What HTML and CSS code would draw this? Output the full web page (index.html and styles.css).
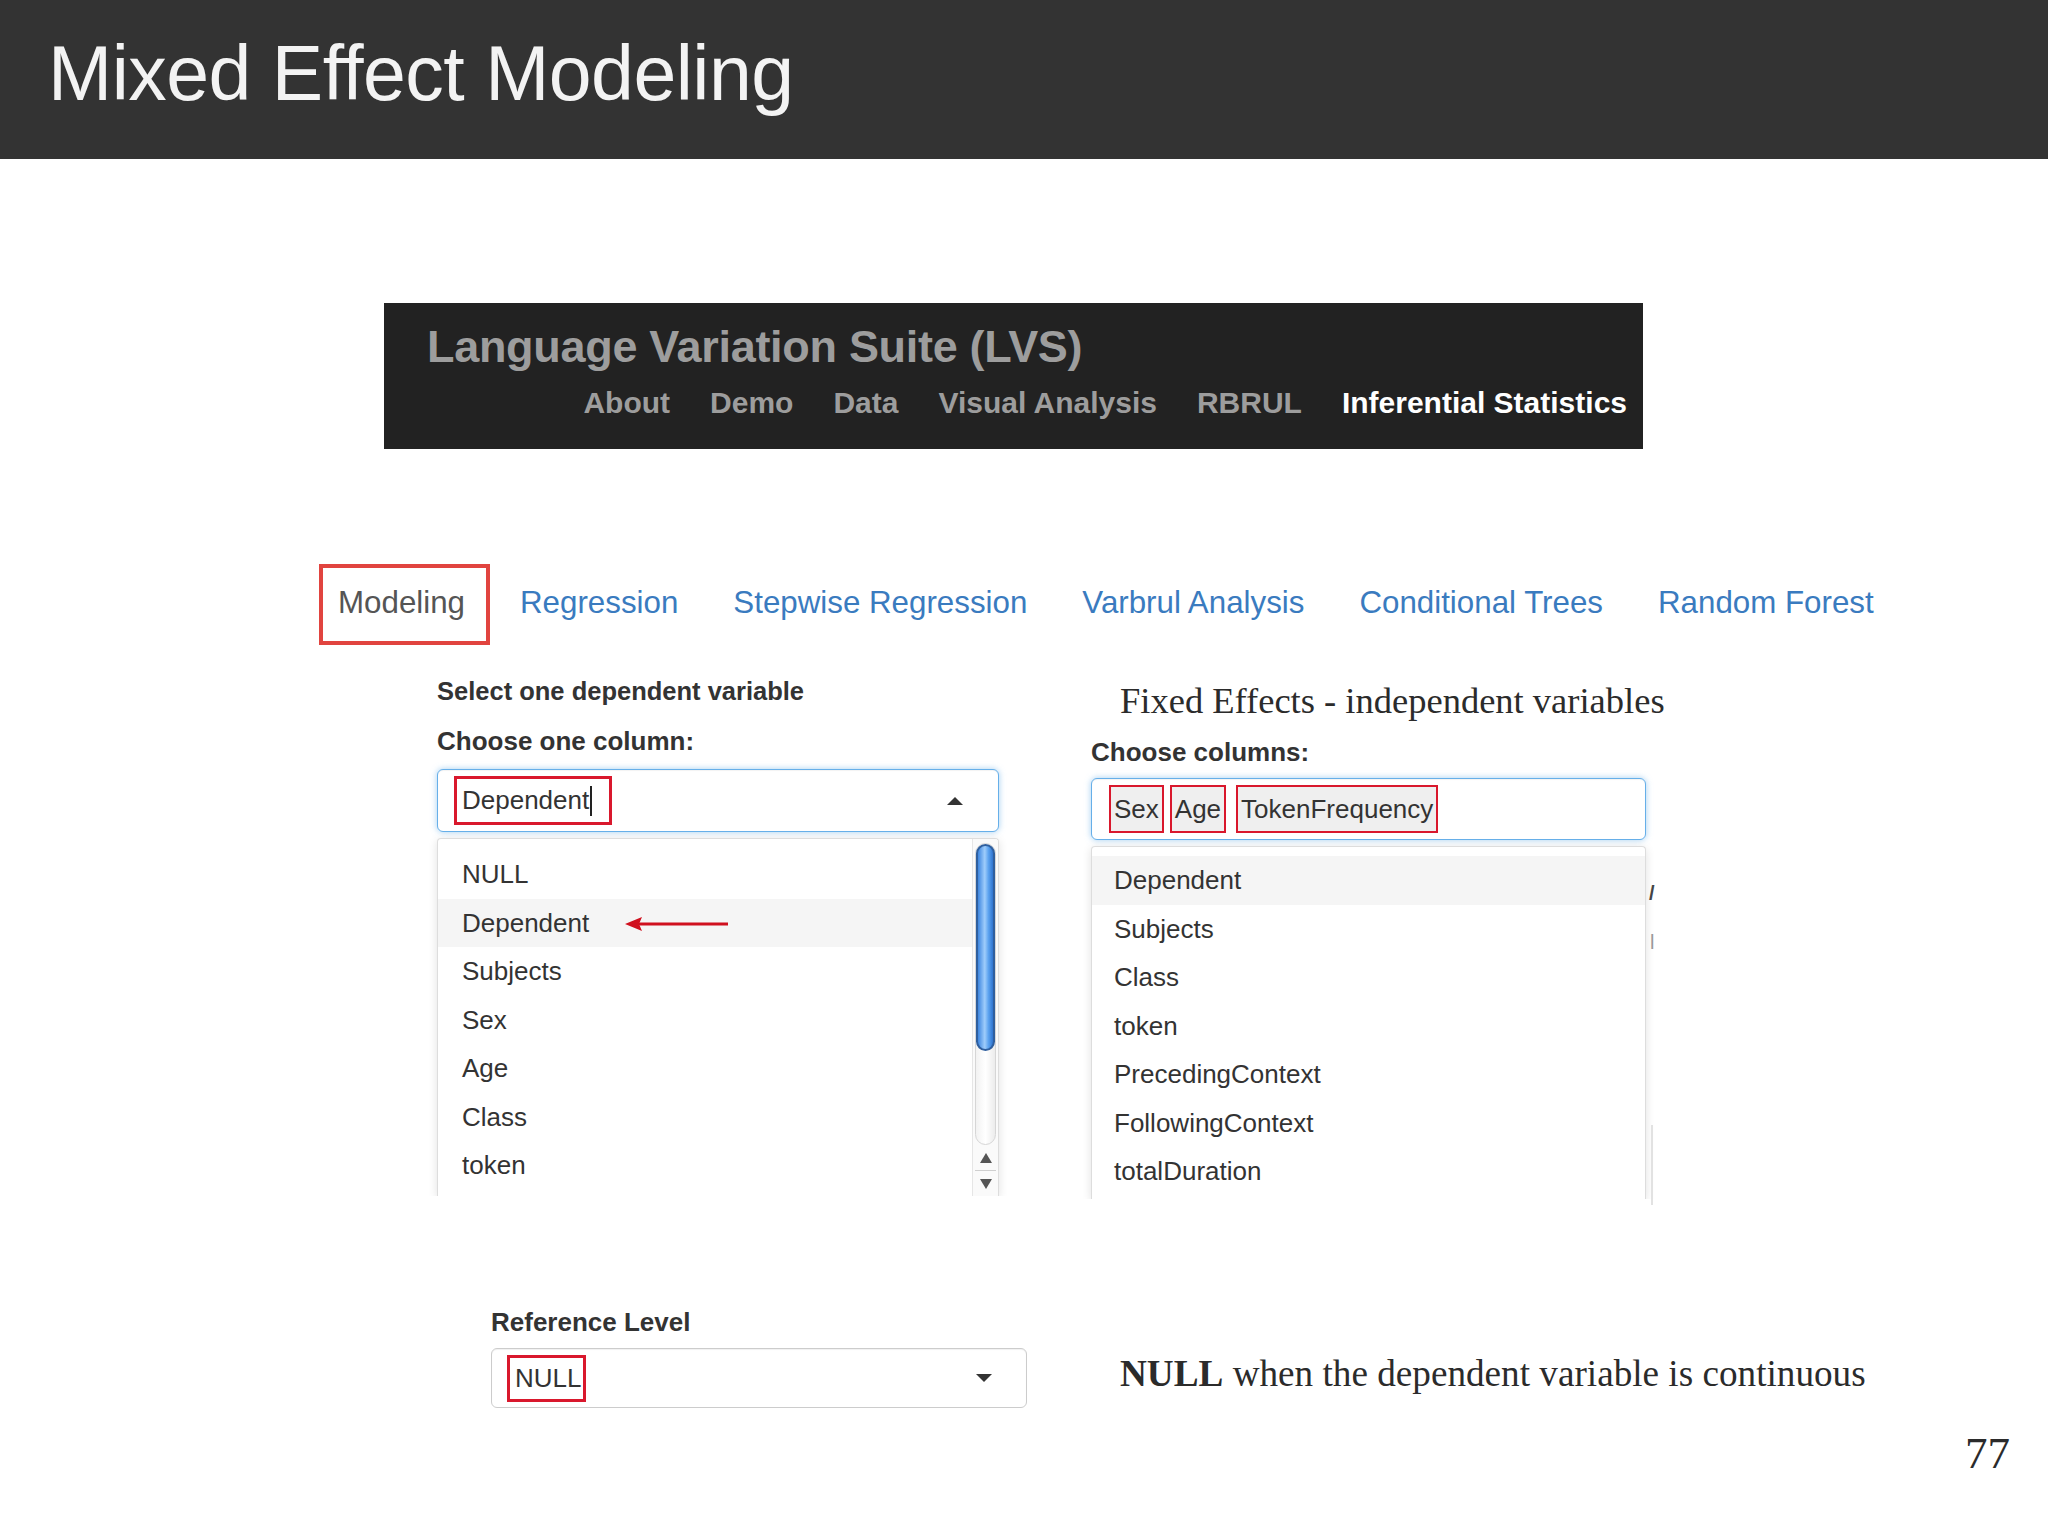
FILE: index.html
```html
<!DOCTYPE html>
<html lang="en">
<head>
<meta charset="utf-8">
<title>Mixed Effect Modeling</title>
<link rel="stylesheet" href="styles.css">
</head>
<body>
<div class="slide">
  <header class="hdr"><h1 class="hdr-title">Mixed Effect Modeling</h1></header>

  <section class="lvs">
    <div class="lvs-title">Language Variation Suite (LVS)</div>
    <nav class="lvs-nav">
      <span>About</span><span>Demo</span><span>Data</span><span>Visual Analysis</span><span>RBRUL</span><span class="on">Inferential Statistics</span>
    </nav>
  </section>

  <nav class="tabs">
    <span class="tab on">Modeling</span>
    <span class="tab">Regression</span>
    <span class="tab">Stepwise Regression</span>
    <span class="tab">Varbrul Analysis</span>
    <span class="tab">Conditional Trees</span>
    <span class="tab">Random Forest</span>
  </nav>

  <div class="cols">
    <div class="col col-left">
      <div class="lbl lbl-sub">Select one dependent variable</div>
      <div class="lbl lbl-gap">Choose one column:</div>
      <div class="select focus sel-left">
        <span class="mark mark-dep">Dependent<i class="cursor"></i></span>
        <span class="caret up"></span>
      </div>
      <div class="list list-left">
        <div class="items items-left">
          <div class="item">NULL</div>
          <div class="item hl">Dependent</div>
          <div class="item">Subjects</div>
          <div class="item">Sex</div>
          <div class="item">Age</div>
          <div class="item">Class</div>
          <div class="item">token</div>
        </div>
        <div class="scroll">
          <div class="track"><div class="thumb"></div></div>
          <div class="sbtn"><span class="tri-up"></span></div>
          <div class="sbtn sep"><span class="tri-down"></span></div>
        </div>
        <svg class="arrow" width="104" height="18" viewBox="0 0 104 18">
          <line x1="14" y1="9" x2="103" y2="9" stroke="#d0101e" stroke-width="3"/>
          <polygon points="0,9 17,2 14,9 17,16" fill="#d0101e"/>
        </svg>
      </div>
    </div>

    <div class="col col-right">
      <div class="serif-head">Fixed Effects - independent variables</div>
      <div class="lbl lbl-gap2">Choose columns:</div>
      <div class="select focus sel-right">
        <span class="tag">Sex</span>
        <span class="tag">Age</span>
        <span class="tag tag-wide">TokenFrequency</span>
      </div>
      <div class="list list-right">
        <div class="items items-right">
          <div class="item hl">Dependent</div>
          <div class="item">Subjects</div>
          <div class="item">Class</div>
          <div class="item">token</div>
          <div class="item">PrecedingContext</div>
          <div class="item">FollowingContext</div>
          <div class="item">totalDuration</div>
        </div>
      </div>
      <span class="peek peek1">/</span>
      <span class="peek peek2">l</span>
      <span class="peek-line"></span>
    </div>
  </div>

  <div class="bottom">
    <div class="ref">
      <div class="lbl">Reference Level</div>
      <div class="select plain sel-ref">
        <span class="mark mark-null">NULL</span>
        <span class="caret down"></span>
      </div>
    </div>
    <p class="note"><b>NULL</b> when the dependent variable is continuous</p>
  </div>

  <footer class="pnum">77</footer>
</div>
</body>
</html>
```

FILE: styles.css
```css
* { box-sizing: border-box; }
html, body { margin: 0; padding: 0; background: #ffffff; }
.slide {
  position: relative;
  width: 2048px;
  height: 1536px;
  overflow: hidden;
  background: #ffffff;
  font-family: "Liberation Sans", Arial, sans-serif;
  color: #333333;
}

/* Slide header */
.hdr {
  height: 159px;
  background: #333333;
  padding-left: 48px;
}
.hdr-title {
  margin: 0;
  font-weight: 400;
  font-size: 77px;
  line-height: 147px;
  color: #f3f3f3;
  letter-spacing: -0.5px;
  white-space: nowrap;
}

/* LVS navbar screenshot */
.lvs {
  margin: 144px 0 0 384px;
  width: 1259px;
  height: 146px;
  background: #222222;
  padding: 18px 16px 0 43px;
}
.lvs-title {
  font-weight: 700;
  font-size: 45px;
  line-height: 52px;
  color: #9d9d9d;
  letter-spacing: -0.3px;
  white-space: nowrap;
}
.lvs-nav {
  margin-top: 12px;
  display: flex;
  justify-content: flex-end;
  gap: 40px;
  font-weight: 700;
  font-size: 30px;
  line-height: 36px;
  color: #9d9d9d;
  white-space: nowrap;
}
.lvs-nav .on { color: #ffffff; }

/* Tabs */
.tabs {
  margin: 115px 0 0 319px;
  display: flex;
  gap: 11px;
  font-size: 31.3px;
}
.tab {
  border: 4px solid transparent;
  padding: 0 21px 3px 15px;
  line-height: 70px;
  color: #3a7bbf;
  white-space: nowrap;
}
.tab.on {
  border-color: #e1443f;
  color: #555555;
}

/* Two columns */
.cols {
  margin: 31px 0 0 437px;
  display: flex;
  gap: 92px;
}
.col { position: relative; }
.col-left { width: 562px; }
.col-right { width: 555px; padding-top: 5px; }

.lbl {
  font-weight: 700;
  font-size: 26px;
  line-height: 30px;
  color: #333333;
  white-space: nowrap;
}
.lbl-sub { font-size: 25.5px; }
.lbl-gap { margin-top: 20px; }
.lbl-gap2 { margin-top: 16px; }

.serif-head {
  font-family: "Liberation Serif", "Times New Roman", serif;
  font-size: 36.5px;
  line-height: 40px;
  color: #2b2b2b;
  padding-left: 29px;
  white-space: nowrap;
}

.select {
  display: flex;
  align-items: center;
  background: #ffffff;
  border-radius: 6px;
  font-size: 26px;
  color: #333333;
}
.select.focus {
  border: 1px solid #66afe9;
  box-shadow: 0 0 6px rgba(102, 175, 233, 0.6), inset 0 1px 1px rgba(0,0,0,0.05);
}
.select.plain {
  border: 1px solid #cccccc;
  box-shadow: inset 0 1px 1px rgba(0,0,0,0.06);
}
.sel-left { margin-top: 13px; height: 63px; padding: 0 35px 0 16px; }
.sel-right { margin-top: 11px; height: 62px; padding: 0 16px 0 17px; gap: 6px; }
.sel-ref { margin-top: 11px; height: 60px; padding: 0 34px 0 15px; }

.mark {
  display: inline-flex;
  align-items: center;
  border: 3px solid #d9182d;
  white-space: nowrap;
}
.mark-dep { height: 49px; width: 158px; padding-left: 5px; }
.mark-null { height: 47px; width: 79px; padding-left: 5px; }
.cursor {
  display: inline-block;
  width: 2px;
  height: 30px;
  background: #222222;
  margin-left: 1px;
}

.caret {
  margin-left: auto;
  width: 0;
  height: 0;
  border-left: 8px solid transparent;
  border-right: 8px solid transparent;
}
.caret.up { border-bottom: 8px solid #333333; }
.caret.down { border-top: 8px solid #333333; }

.tag {
  display: inline-flex;
  align-items: center;
  height: 48px;
  padding: 0 3px;
  border: 2px solid #d9182d;
  background: #efefef;
  white-space: nowrap;
}
.tag-wide { margin-left: 4px; }

/* Dropdown lists */
.list {
  position: relative;
  display: flex;
  margin-top: 6px;
  background: #ffffff;
  border: 1px solid #dddddd;
  border-bottom: 0;
  border-radius: 4px 4px 0 0;
  box-shadow: 0 2px 10px rgba(0,0,0,0.12);
  clip-path: inset(-12px -12px 0 -12px);
  overflow: hidden;
}
.list-left { height: 358px; }
.list-right { height: 353px; }
.items {
  flex: 1;
  font-size: 26px;
  color: #333333;
}
.items-left { padding-top: 11px; }
.items-right { padding-top: 9px; }
.item {
  height: 48.5px;
  line-height: 48.5px;
  white-space: nowrap;
}
.items-left .item { padding-left: 24px; }
.items-right .item { padding-left: 22px; }
.item.hl { background: #f5f5f5; }

.scroll {
  width: 26px;
  display: flex;
  flex-direction: column;
  background: #fafafa;
  border-left: 1px solid #e6e6e6;
  padding: 4px 2px 0 2px;
}
.track {
  height: 306px;
  border-radius: 11px;
  background: linear-gradient(to right, #f2f2f2, #ffffff 50%, #ececec);
  border: 1px solid #d6d6d6;
}
.thumb {
  height: 207px;
  border-radius: 11px;
  border: 2px solid #2f5f9e;
  background: linear-gradient(to right, #3d86e0, #9fcdfb 45%, #5ba2ef 70%, #2f74cf);
}
.sbtn {
  height: 26px;
  display: flex;
  align-items: center;
  justify-content: center;
}
.sbtn.sep { border-top: 1px solid #cfcfcf; }
.tri-up, .tri-down {
  width: 0; height: 0;
  border-left: 6px solid transparent;
  border-right: 6px solid transparent;
}
.tri-up { border-bottom: 10px solid #555555; }
.tri-down { border-top: 10px solid #555555; }

.arrow {
  position: absolute;
  left: 187px;
  top: 76px;
}

/* Bits of the UI behind the right dropdown */
.peek {
  position: absolute;
  font-size: 20px;
  font-weight: 700;
  color: #444444;
  line-height: 24px;
  white-space: nowrap;
}
.peek1 { left: 558px; top: 205px; }
.peek2 { left: 559px; top: 254px; font-weight: 400; color: #9a9a9a; }
.peek-line {
  position: absolute;
  left: 560px;
  top: 449px;
  width: 2px;
  height: 80px;
  background: #e2e2e2;
}

/* Bottom row */
.bottom {
  margin: 108px 0 0 491px;
  display: flex;
  gap: 93px;
  align-items: flex-start;
}
.ref { width: 536px; }
.note {
  margin: 47px 0 0 0;
  font-family: "Liberation Serif", "Times New Roman", serif;
  font-size: 37.2px;
  line-height: 40px;
  color: #2b2b2b;
  white-space: nowrap;
}

.pnum {
  margin-top: 20px;
  padding-right: 38px;
  text-align: right;
  font-family: "Liberation Serif", "Times New Roman", serif;
  font-size: 45px;
  line-height: 50px;
  color: #2b2b2b;
}
```
